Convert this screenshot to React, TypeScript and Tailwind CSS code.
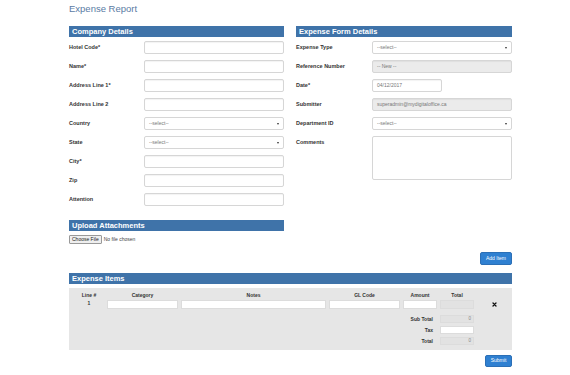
import React from "react"

const Header = ({ title }: { title: string }) => (
	<div className="h-[11px] bg-[#3f73a9] pl-[3px] text-[7.5px] font-bold leading-[11px] text-white">{title}</div>
)

const Field = ({ value = "", disabled = false, width = "w-[140px]" }: { value?: string; disabled?: boolean; width?: string }) => (
	<div
		className={`${width} flex h-[13px] items-center rounded-[2px] border border-[#d6d6d6] px-[4px] text-[5px] text-[#777] shadow-[inset_0_1px_1px_rgba(0,0,0,0.05)] ${
			disabled ? "bg-[#ebebeb]" : "bg-white"
		}`}
	>
		{value}
	</div>
)

const Select = () => (
	<div className="flex h-[13px] w-[140px] items-center justify-between rounded-[2px] border border-[#d6d6d6] bg-white px-[4px] text-[5px] text-[#777]">
		<span>--select--</span>
		<span className="h-0 w-0 border-x-[1.5px] border-t-[2px] border-x-transparent border-t-[#333]" />
	</div>
)

const Row = ({ label, children }: { label: string; children: React.ReactNode }) => (
	<div className="flex items-start">
		<div className="h-[13px] w-[75px] shrink-0 text-[5.5px] font-bold leading-[13px] text-[#333]">{label}</div>
		{children}
	</div>
)

const Cell = ({ disabled = false, value = "" }: { disabled?: boolean; value?: string }) => (
	<div
		className={`flex h-[9px] items-center justify-end border border-[#dcdcdc] pr-[2px] text-[4.5px] text-[#888] ${
			disabled ? "bg-[#e2e2e2]" : "bg-white"
		}`}
	>
		{value}
	</div>
)

export default function App() {
	return (
		<div className="h-[375px] w-[570px] bg-white font-['Liberation_Sans',Arial,sans-serif]">
			<div className="ml-[69px] w-[443px]">
				<div className="h-[18px] text-[9.5px] leading-[18px] text-[#5a7ba4]">Expense Report</div>

				<div className="mt-[8px] flex gap-[12px]">
					<div className="w-[215px]">
						<Header title="Company Details" />
						<div className="mt-[4px] flex flex-col gap-[6px]">
							<Row label="Hotel Code*"><Field /></Row>
							<Row label="Name*"><Field /></Row>
							<Row label="Address Line 1*"><Field /></Row>
							<Row label="Address Line 2"><Field /></Row>
							<Row label="Country"><Select /></Row>
							<Row label="State"><Select /></Row>
							<Row label="City*"><Field /></Row>
							<Row label="Zip"><Field /></Row>
							<Row label="Attention"><Field /></Row>
						</div>
						<div className="mt-[14px]">
							<Header title="Upload Attachments" />
						</div>
						<div className="mt-[4px] flex items-center gap-[2px] text-[5px]">
							<span className="flex h-[9px] items-center rounded-[1px] border border-[#999] bg-[#efefef] px-[2px] text-[#222]">
								Choose File
							</span>
							<span className="text-[#444]">No file chosen</span>
						</div>
					</div>

					<div className="w-[216px]">
						<Header title="Expense Form Details" />
						<div className="mt-[4px] flex flex-col gap-[6px]">
							<Row label="Expense Type"><div className="ml-[1px]"><Select /></div></Row>
							<Row label="Reference Number"><div className="ml-[1px]"><Field value="-- New --" disabled /></div></Row>
							<Row label="Date*"><div className="ml-[1px]"><Field value="04/12/2017" width="w-[70px]" /></div></Row>
							<Row label="Submitter"><div className="ml-[1px]"><Field value="superadmin@mydigitaloffice.ca" disabled /></div></Row>
							<Row label="Department ID"><div className="ml-[1px]"><Select /></div></Row>
							<Row label="Comments">
								<div className="ml-[1px] h-[44px] w-[140px] rounded-[2px] border border-[#d6d6d6] bg-white" />
							</Row>
						</div>
					</div>
				</div>

				<div className="mt-[8px] flex justify-end">
					<button className="h-[13px] w-[32px] rounded-[2px] border border-[#2b6fb6] bg-[#2f80d1] text-[5px] text-white">
						Add Item
					</button>
				</div>

				<div className="mt-[8px]">
					<Header title="Expense Items" />
				</div>
				<div className="mt-[4px] h-[62px] bg-[#e6e6e6] pt-[3px]">
					<div className="grid grid-cols-[35px_71px_145px_71px_34px_34px_35px] gap-x-[3px]">
						<div className="h-[9px] pl-[5px] text-center text-[5px] font-bold leading-[9px] text-[#333]">Line #</div>
						<div className="text-center text-[5px] font-bold leading-[9px] text-[#333]">Category</div>
						<div className="text-center text-[5px] font-bold leading-[9px] text-[#333]">Notes</div>
						<div className="text-center text-[5px] font-bold leading-[9px] text-[#333]">GL Code</div>
						<div className="text-center text-[5px] font-bold leading-[9px] text-[#333]">Amount</div>
						<div className="text-center text-[5px] font-bold leading-[9px] text-[#333]">Total</div>
						<div />

						<div className="h-[9px] pl-[5px] text-center text-[5px] font-bold leading-[7px] text-[#333]">1</div>
						<Cell />
						<Cell />
						<Cell />
						<Cell />
						<Cell disabled />
						<div className="flex items-center justify-center">
							<svg width="5" height="5" viewBox="0 0 10 10">
								<path d="M2 2L8 8M8 2L2 8" stroke="#111" strokeWidth="2.6" strokeLinecap="round" />
							</svg>
						</div>
					</div>

					<div className="mt-[6px] grid grid-cols-[35px_71px_145px_71px_34px_34px_35px] gap-x-[3px] gap-y-[3px]">
						<div className="col-span-5 h-[8px] pr-[4px] text-right text-[5px] font-bold leading-[8px] text-[#333]">Sub Total</div>
						<div className="flex h-[8px] items-center justify-end border border-[#dcdcdc] bg-[#e2e2e2] pr-[2px] text-[4.5px] text-[#888]">0</div>
						<div />
						<div className="col-span-5 h-[8px] pr-[4px] text-right text-[5px] font-bold leading-[8px] text-[#333]">Tax</div>
						<div className="h-[8px] border border-[#dcdcdc] bg-white" />
						<div />
						<div className="col-span-5 h-[8px] pr-[4px] text-right text-[5px] font-bold leading-[8px] text-[#333]">Total</div>
						<div className="flex h-[8px] items-center justify-end border border-[#dcdcdc] bg-[#e2e2e2] pr-[2px] text-[4.5px] text-[#888]">0</div>
						<div />
					</div>
				</div>

				<div className="mt-[5px] flex justify-end">
					<button className="h-[12px] w-[27px] rounded-[2px] border border-[#2b6fb6] bg-[#2f80d1] text-[5px] text-white">
						Submit
					</button>
				</div>
			</div>
		</div>
	)
}
